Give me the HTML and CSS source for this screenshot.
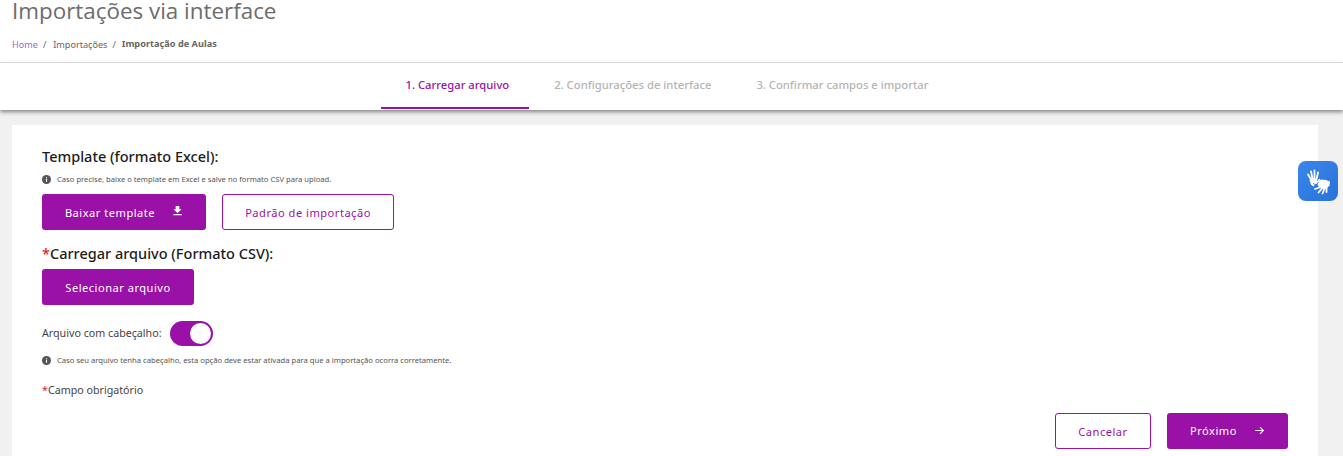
FILE: index.html
```html
<!DOCTYPE html>
<html lang="pt-BR">
<head>
<meta charset="utf-8">
<title>Importações via interface</title>
<link rel="stylesheet" href="styles.css">
</head>
<body>
<header class="page-head">
  <h1 class="title">Importações via interface</h1>
  <nav class="crumbs">
    <a class="crumb-home">Home</a><span class="sep">/</span>
    <span class="crumb">Importações</span><span class="sep">/</span>
    <strong class="crumb-current">Importação de Aulas</strong>
  </nav>
</header>
<div class="tabs">
  <div class="tab tab-active">1. Carregar arquivo</div>
  <div class="tab">2. Configurações de interface</div>
  <div class="tab">3. Confirmar campos e importar</div>
</div>
<main class="card">
  <h2 class="heading">Template (formato Excel):</h2>
  <p class="hint hint-top"><svg class="info" viewBox="0 0 16 16"><circle cx="8" cy="8" r="8" fill="#555"/><rect x="7" y="7" width="2" height="5" fill="#fff"/><rect x="7" y="4" width="2" height="2" fill="#fff"/></svg>Caso precise, baixe o template em Excel e salve no formato CSV para upload.</p>
  <div class="btn-row">
    <button class="btn btn-fill btn-download">Baixar template<svg class="ico-dl" viewBox="0 0 12 12"><path d="M4 1h4v3.5h2.500L6 8.600 1.500 4.500H4z" fill="#fff"/><rect x="1.500" y="9.800" width="9" height="1.400" fill="#fff"/></svg></button>
    <button class="btn btn-line btn-pattern">Padrão de importação</button>
  </div>
  <h2 class="heading heading-upload"><span class="req">*</span>Carregar arquivo (Formato CSV):</h2>
  <button class="btn btn-fill btn-select">Selecionar arquivo</button>
  <div class="switch-row">
    <span class="switch-label">Arquivo com cabeçalho:</span>
    <span class="switch"><span class="knob"></span></span>
  </div>
  <p class="hint hint-switch"><svg class="info" viewBox="0 0 16 16"><circle cx="8" cy="8" r="8" fill="#555"/><rect x="7" y="7" width="2" height="5" fill="#fff"/><rect x="7" y="4" width="2" height="2" fill="#fff"/></svg>Caso seu arquivo tenha cabeçalho, esta opção deve estar ativada para que a importação ocorra corretamente.</p>
  <p class="required"><span class="req">*</span>Campo obrigatório</p>
  <div class="actions">
    <button class="btn btn-line btn-cancel">Cancelar</button>
    <button class="btn btn-fill btn-next">Próximo<svg class="ico-arrow" viewBox="0 0 12 12"><path d="M1.500 6h8.500M6.500 2.200 10.300 6 6.500 9.800" fill="none" stroke="#fff" stroke-width="1.200"/></svg></button>
  </div>
</main>
<div class="vlibras" aria-label="VLibras">
  <svg viewBox="0 0 40 40" width="40" height="40">
    <g fill="none" stroke="#fff" stroke-linecap="round">
      <path stroke-width="1.800" d="M14.500 21 10 13.500M15 20 13 10.500M16.500 20 16.500 9.500M18 20.500 20 11.500"/>
      <path stroke-width="1.400" d="M18 22.500 21.500 18.500"/>
      <path stroke-width="1.800" d="M23 26 17 28M24.500 27 20.500 31.500M26.500 27.500 24.500 32.500M28.500 26.500 28.500 31"/>
    </g>
    <path fill="#fff" d="M11.500 19l4.500-1.500 3 1.500-1.500 4-2 2.500-2.500-2z"/>
    <path fill="#fff" d="M19 21l4-2.500 5 .5 4 1.500-.5 4-3 3-5 .5-3-2.500-1-2z"/>
    <path fill="none" stroke="#2f7de1" stroke-width=".9" d="M15 22.500l3.500 1.500 2-3"/>
  </svg>
</div>
</body>
</html>
```

FILE: styles.css
```css
* { box-sizing: border-box; }
html, body { margin: 0; padding: 0; }
body {
  width: 1343px;
  height: 456px;
  overflow: hidden;
  background: #f1f1f1;
  font-family: "Noto Sans", "Open Sans", sans-serif;
  position: relative;
}
.page-head {
  background: #fff;
  height: 63px;
  padding: 0 12px;
  border-bottom: 1px solid #e3e3e3;
}
.title {
  margin: 0;
  font-family: "Open Sans", sans-serif;
  font-size: 22.400px;
  line-height: 22px;
  font-weight: 400;
  color: #6c6c6c;
}
.crumbs {
  margin-top: 15px;
  font-size: 9.100px;
  line-height: 16px;
  color: #666;
  display: flex;
  align-items: baseline;
}
.crumb-home { color: #a667c8; }
.sep { margin: 0 7px 0 5px; }
.crumb-current { font-size: 9.200px; font-weight: 700; color: #666; margin-left: -1px; position: relative; top: -1px; }
.tabs {
  height: 47px;
  background: #fff;
  display: flex;
  justify-content: center;
  padding-right: 14px;
  box-shadow: 0 2px 4px rgba(0, 0, 0, .45);
  position: relative;
}
.tab {
  padding: 14px 20px 0 25px;
  font-size: 11.250px;
  line-height: 16px;
  font-weight: 500;
  color: #b4b4b4;
}
.tab-active {
  color: #9a11a8;
  border-bottom: 2px solid #9a11a8;
  height: 46px;
}
.card {
  margin: 15px 25px 0 12px;
  background: #fff;
  height: 340px;
  padding: 23px 30px 0;
}
.heading {
  margin: 0;
  font-size: 14.500px;
  line-height: 16px;
  font-weight: 500;
  color: #1c1c1c;
}
.hint {
  margin: 0;
  display: flex;
  align-items: center;
  font-size: 7.650px;
  line-height: 12px;
  color: #555;
}
.hint-top { margin-top: 9px; }
.info { width: 9px; height: 9px; margin-right: 6px; flex: none; }
.btn-row { display: flex; gap: 16px; margin-top: 9px; }
.btn {
  height: 36px;
  border-radius: 3px;
  font-family: inherit;
  font-size: 11.100px;
  letter-spacing: .5px;
  padding: 0;
  display: inline-flex;
  align-items: center;
  justify-content: center;
}
.btn-fill { background: #9a11a8; border: 0; color: #fff; }
.btn-line { background: #fff; border: 1px solid #9a11a8; color: #9a11a8; }
.btn-download { width: 164px; }
.btn-pattern { width: 172px; }
.ico-dl { width: 11px; height: 11px; margin-left: 17px; margin-top: -3px; }
.heading-upload { margin-top: 15px; }
.req { color: #e2231a; }
.btn-select { width: 152px; margin-top: 8px; }
.switch-row { display: flex; align-items: center; margin-top: 15px; height: 26px; }
.switch-label { font-size: 10.700px; color: #444; margin-right: 8px; }
.switch {
  width: 43px;
  height: 25px;
  border-radius: 13px;
  background: #9a11a8;
  display: flex;
  align-items: center;
  justify-content: flex-end;
  padding-right: 2px;
}
.knob { width: 21px; height: 21px; border-radius: 50%; background: #fff; }
.hint-switch { margin-top: 8px; }
.required { margin: 16px 0 0; font-size: 10.700px; line-height: 16px; color: #444; }
.actions { display: flex; justify-content: flex-end; gap: 16px; margin-top: 15px; }
.btn-cancel { width: 96px; }
.btn-next { width: 121px; padding-bottom: 1px; }
.ico-arrow { width: 11px; height: 11px; margin-left: 17px; }
.vlibras {
  position: absolute;
  left: 1298px;
  top: 161px;
  width: 40px;
  height: 40px;
  border-radius: 8px;
  background: linear-gradient(135deg, #3a86e8, #2a72dc);
}
.vlibras svg { display: block; }
```
